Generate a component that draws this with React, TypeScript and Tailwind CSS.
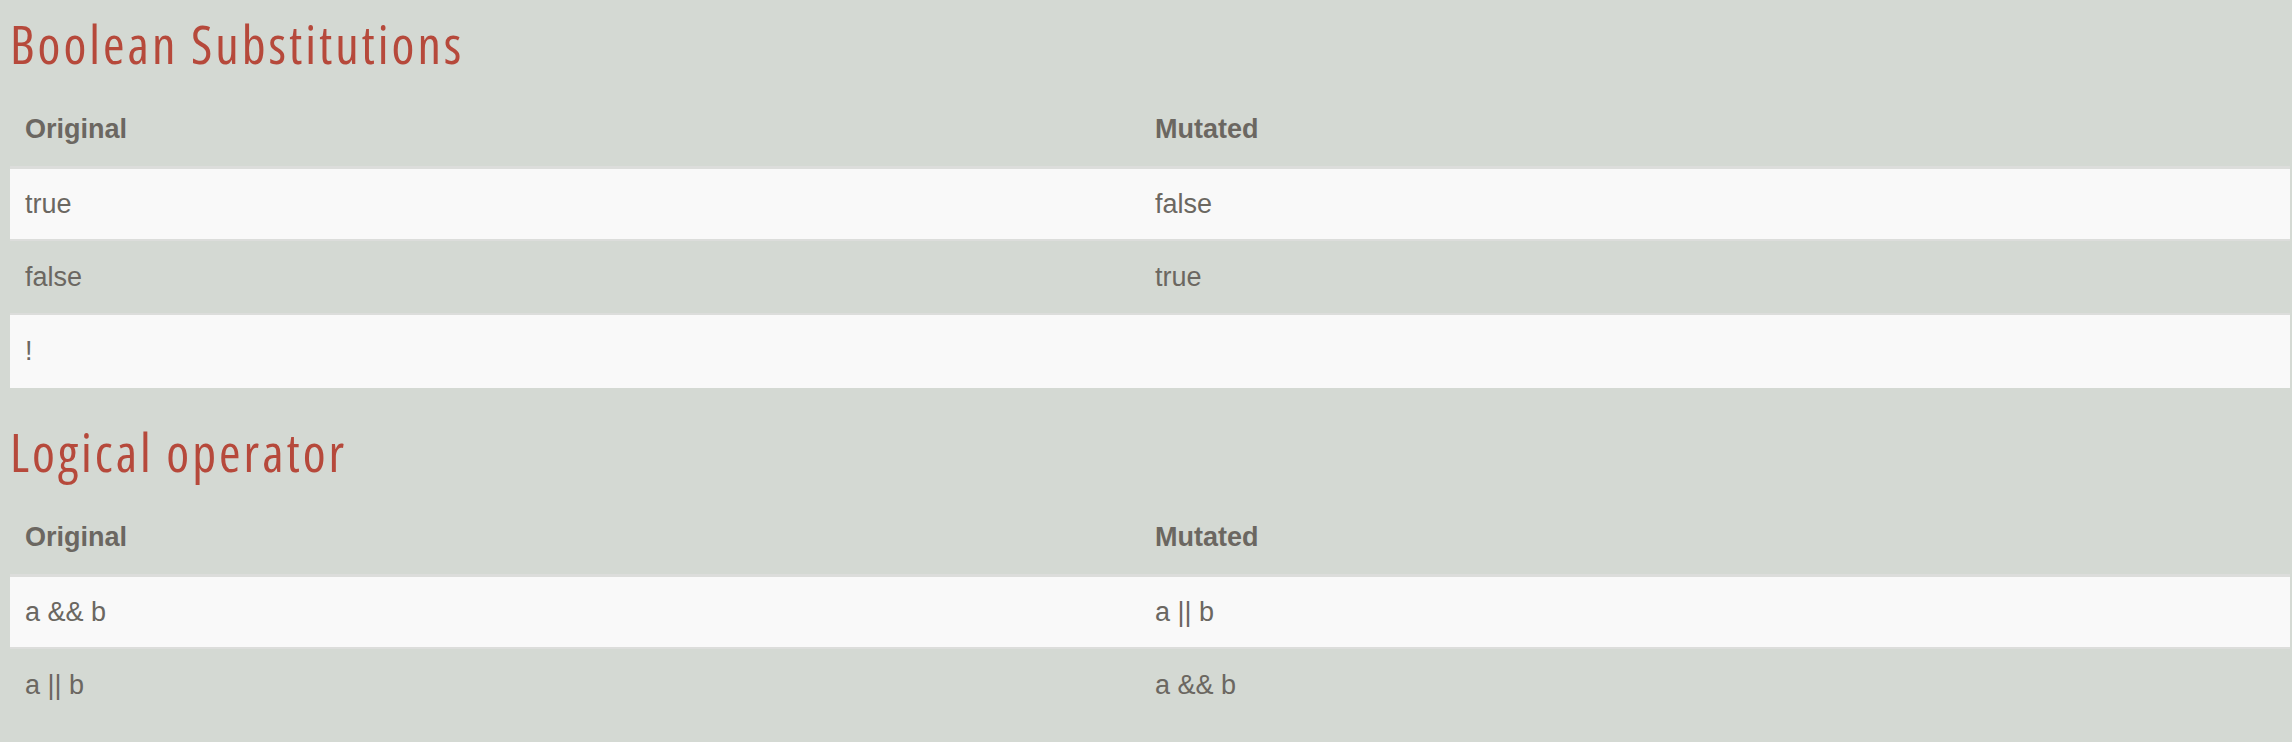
import React from "react";

type Row = [string, string];

const sections: { title: string; rows: Row[] }[] = [
  {
    title: "Boolean Substitutions",
    rows: [
      ["true", "false"],
      ["false", "true"],
      ["!", ""],
    ],
  },
  {
    title: "Logical operator",
    rows: [
      ["a && b", "a || b"],
      ["a || b", "a && b"],
    ],
  },
];

function Section({ title, rows }: { title: string; rows: Row[] }) {
  return (
    <section className="pb-[20px]">
      <h2
        className="h-[92px] pt-[19px] pl-[10px] text-[52px] leading-[50px] font-normal tracking-[3px] text-[#b6493b] [font-stretch:75%]"
        style={{ fontFamily: '"Open Sans", "DejaVu Sans Condensed", sans-serif' }}
      >
        {title}
      </h2>
      <table
        className="w-[2280px] ml-[10px] table-fixed border-collapse text-[27px] text-[#6b6761]"
        style={{ fontFamily: '"Liberation Sans", Arial, sans-serif' }}
      >
        <colgroup>
          <col className="w-[1130px]" />
          <col />
        </colgroup>
        <thead>
          <tr className="h-[75px] border-b-[3px] border-[#dcdddb]">
            <th className="px-[15px] text-left font-bold align-middle">Original</th>
            <th className="px-[15px] text-left font-bold align-middle">Mutated</th>
          </tr>
        </thead>
        <tbody>
          {rows.map((r, i) => (
            <tr
              key={i}
              className={
                (i === 0 ? "h-[73px] " : "h-[74px] border-t-2 border-[#dcdddb] ") +
                (i % 2 === 0 ? "bg-[#f9f9f9]" : "bg-[#d4d9d3]")
              }
            >
              <td className="px-[15px] align-middle">{r[0]}</td>
              <td className="px-[15px] align-middle">{r[1]}</td>
            </tr>
          ))}
        </tbody>
      </table>
    </section>
  );
}

export default function App() {
  return (
    <div className="w-[2292px] h-[742px] overflow-hidden bg-[#d4d9d3]">
      {sections.map((s) => (
        <Section key={s.title} title={s.title} rows={s.rows} />
      ))}
    </div>
  );
}
